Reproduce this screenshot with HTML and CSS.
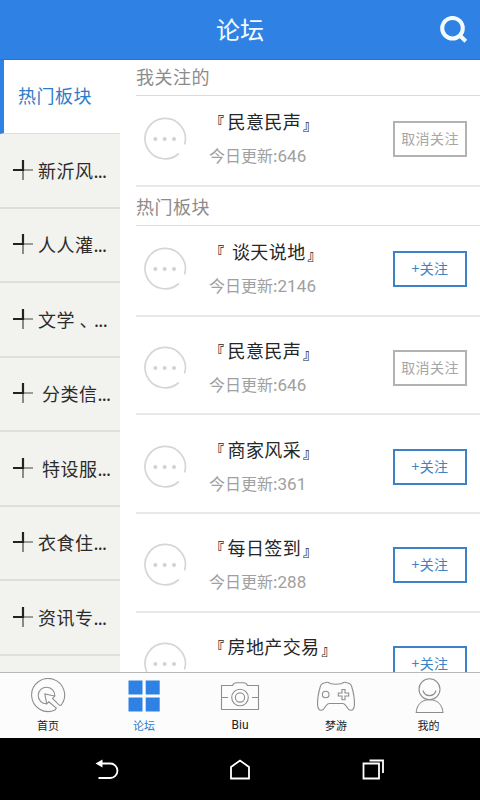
FILE: index.html
```html
<!DOCTYPE html>
<html lang="zh-CN">
<head>
    <meta charset="UTF-8">
    <meta name="viewport" content="width=device-width, initial-scale=1.0">
    <title>论坛</title>
    <link rel="stylesheet" href="styles.css">
</head>
<body>

    <!-- Shared icons -->
    <svg class="icon-defs" width="0" height="0">
        <symbol id="icon-plus" viewBox="0 0 22 22">
            <path d="M11 11v10M11 11h10" stroke="#444" stroke-width="1.2"/>
            <path d="M1 11h11M11 1v11" stroke="#222" stroke-width="2.2"/>
        </symbol>
        <symbol id="icon-chat" viewBox="0 0 44 44">
            <path d="M41.5 27.5A20.2 20.2 0 1 0 35.8 36.5" fill="none" stroke="#d6d6d6" stroke-width="1.7"/>
            <circle cx="12.3" cy="22" r="2" fill="#d2d2d2"/>
            <circle cx="21.7" cy="22" r="2" fill="#d2d2d2"/>
            <circle cx="31" cy="22" r="2" fill="#d2d2d2"/>
        </symbol>
    </svg>

    <div class="app">
        <header class="header">
            <h1>论坛</h1>
            <svg class="search" viewBox="0 0 28 28">
                <circle cx="12.5" cy="12.2" r="10.3"/>
                <path d="M18.5 18.2L25.8 25.2"/>
            </svg>
        </header>

        <div class="content">
            <!-- Categories -->
            <nav class="sidebar">
                <a class="category active">热门板块</a>
                <a class="category"><svg class="plus"><use href="#icon-plus"/></svg>新沂风<span class="dots">...</span></a>
                <a class="category"><svg class="plus"><use href="#icon-plus"/></svg>人人灌<span class="dots">...</span></a>
                <a class="category"><svg class="plus"><use href="#icon-plus"/></svg>文学 <span class="comma">、</span><span class="dots">...</span></a>
                <a class="category spaced"><svg class="plus"><use href="#icon-plus"/></svg>分类信<span class="dots">...</span></a>
                <a class="category spaced"><svg class="plus"><use href="#icon-plus"/></svg>特设服<span class="dots">...</span></a>
                <a class="category"><svg class="plus"><use href="#icon-plus"/></svg>衣食住<span class="dots">...</span></a>
                <a class="category"><svg class="plus"><use href="#icon-plus"/></svg>资讯专<span class="dots">...</span></a>
            </nav>

            <!-- Forum list -->
            <main class="forums">
                <h2 class="first-title">我关注的</h2>
                <div class="forum short">
                    <svg class="chat"><use href="#icon-chat"/></svg>
                    <div class="info">
                        <h3><span class="open">『</span>民意民声<span class="close">』</span></h3>
                        <p>今日更新:<span class="count">646</span></p>
                    </div>
                    <button class="follow followed">取消关注</button>
                </div>

                <h2>热门板块</h2>
                <div class="forum short">
                    <svg class="chat"><use href="#icon-chat"/></svg>
                    <div class="info">
                        <h3><span class="open">『</span> 谈天说地<span class="close">』</span></h3>
                        <p>今日更新:<span class="count">2146</span></p>
                    </div>
                    <button class="follow">+关注</button>
                </div>
                <div class="forum">
                    <svg class="chat"><use href="#icon-chat"/></svg>
                    <div class="info">
                        <h3><span class="open">『</span>民意民声<span class="close">』</span></h3>
                        <p>今日更新:<span class="count">646</span></p>
                    </div>
                    <button class="follow followed">取消关注</button>
                </div>
                <div class="forum">
                    <svg class="chat"><use href="#icon-chat"/></svg>
                    <div class="info">
                        <h3><span class="open">『</span>商家风采<span class="close">』</span></h3>
                        <p>今日更新:<span class="count">361</span></p>
                    </div>
                    <button class="follow">+关注</button>
                </div>
                <div class="forum">
                    <svg class="chat"><use href="#icon-chat"/></svg>
                    <div class="info">
                        <h3><span class="open">『</span>每日签到<span class="close">』</span></h3>
                        <p>今日更新:<span class="count">288</span></p>
                    </div>
                    <button class="follow">+关注</button>
                </div>
                <div class="forum">
                    <svg class="chat"><use href="#icon-chat"/></svg>
                    <div class="info">
                        <h3><span class="open">『</span>房地产交易<span class="close">』</span></h3>
                    </div>
                    <button class="follow">+关注</button>
                </div>
            </main>
        </div>

        <!-- Bottom tabs -->
        <nav class="tabs">
            <a class="tab">
                <svg viewBox="1.5 0 40 36">
                    <path d="M34.5 27.3A16.5 16.5 0 1 0 28.5 32L29.8 30L22.3 23.8L20.3 25.8L18.3 16L28.3 18L26 20.5L33 27.3Z"/>
                    <path d="M20 25.8A8.3 8.3 0 1 1 28.3 18"/>
                </svg>
                <span>首页</span>
            </a>
            <a class="tab active">
                <svg viewBox="0 0 40 36">
                    <path d="M4.5 2.5h14v14h-14zM21.7 2.5h14v14h-14zM4.5 19.5h14v14h-14zM21.7 19.5h14v14h-14z"/>
                </svg>
                <span>论坛</span>
            </a>
            <a class="tab">
                <svg viewBox="0 0 40 36">
                    <path d="M1.5 7.5h11q1-2.7 4-2.7h7q3 0 4 2.7h11v24h-37z"/>
                    <circle cx="20" cy="19.5" r="8.3"/>
                    <circle cx="20" cy="19.5" r="4.6"/>
                    <path d="M2 19.5h6M32 19.5h6"/>
                </svg>
                <span class="latin">Biu</span>
            </a>
            <a class="tab">
                <svg viewBox="0 0 40 36">
                    <path d="M9 4.7Q12 3.6 14 5.5Q20 7 26 5.5Q28 3.6 31 4.7Q35 5.2 35.8 9Q38.8 19 38.4 27Q38 32.5 34.5 32.2Q32.5 32 30.5 28.5Q28.5 25.5 27 25.5H13Q11.5 25.5 9.5 28.5Q7.5 32 5.5 32.2Q2 32.5 1.6 27Q1.2 19 4.2 9Q5 5.2 9 4.7Z"/>
                    <circle cx="9.7" cy="16.5" r="3.3"/>
                    <path d="M26 11.5h3v3.5h3.7v3h-3.7v3.7h-3v-3.7h-3.7v-3h3.7z"/>
                </svg>
                <span>梦游</span>
            </a>
            <a class="tab last">
                <svg viewBox="0.5 0 40 36">
                    <circle cx="21" cy="11.3" r="10.5"/>
                    <path d="M14.5 12.5A6.7 6.7 0 0 0 27.5 12.5"/>
                    <path d="M7.7 34.5C8.5 26 14 21.8 21 21.8S33.5 26 34.5 34.5Z"/>
                </svg>
                <span>我的</span>
            </a>
        </nav>

        <!-- System navigation -->
        <footer class="system-bar">
            <svg viewBox="0 0 24 24">
                <path d="M5 4.5h10.2a7.2 7.2 0 0 1 0 14.5H3.5"/>
                <path class="solid" d="M0.5 4.5L7.5 0.5v8z"/>
            </svg>
            <svg viewBox="0 0 24 24">
                <path d="M3 19.5V8L12 1.5L21 8V19.5Z"/>
            </svg>
            <svg viewBox="0 0 24 24">
                <path d="M2.5 4.5h15.5v15h-15.5z"/>
                <path d="M8.5 1.5h13.5V14"/>
            </svg>
        </footer>
    </div>

</body>
</html>
```
FILE: styles.css
```css
* {
    box-sizing: border-box;
}
body {
    margin: 0;
    font-family: "Noto Sans CJK SC", sans-serif;
    background-color: #fff;
}
h1, h2, h3, p {
    margin: 0;
    font-weight: 400;
}
.icon-defs {
    display: none;
}
.app {
    display: flex;
    flex-direction: column;
    width: 480px;
    height: 800px;
    overflow: hidden;
}
.header {
    display: grid;
    grid-template-columns: 1fr auto 1fr;
    align-items: center;
    height: 60px;
    flex-shrink: 0;
    padding-right: 12px;
    padding-left: 12px;
    background-color: #2f82e4;
    border-bottom: 1px solid #2874cf;
}
.header h1 {
    grid-column: 2;
    height: 59px;
    font-size: 24px;
    line-height: 57px;
    color: #f2fbff;
}
.search {
    justify-self: end;
    width: 28px;
    height: 28px;
    fill: none;
    stroke: #f2fbff;
    stroke-width: 4;
}
.content {
    display: flex;
    height: 612px;
    flex-shrink: 0;
    overflow: hidden;
}
.sidebar {
    width: 120px;
    flex-shrink: 0;
    background-color: #f2f2ee;
}
.category {
    display: flex;
    align-items: center;
    height: 74.5px;
    padding-left: 12px;
    padding-bottom: 1px;
    border-bottom: 2px solid #dededb;
    font-size: 18px;
    letter-spacing: 0.5px;
    color: #2b2b2b;
    white-space: pre;
}
.category.active {
    height: 74px;
    padding-left: 14px;
    padding-bottom: 3px;
    border-left: 4px solid #2f82e4;
    border-bottom: 1px solid #dededb;
    background-color: #fff;
    color: #2e7cc8;
}
.plus {
    width: 22px;
    height: 22px;
    flex-shrink: 0;
    margin-right: 4px;
}
.spaced .plus {
    margin-right: 8px;
}
.dots {
    letter-spacing: -0.7px;
}
.comma {
    margin-right: 5px;
    font-feature-settings: "halt";
}
.forums {
    flex: 1;
    padding-left: 16px;
}
.forums h2 {
    height: 39.5px;
    border-bottom: 1px solid #dcdcdc;
    font-size: 18px;
    line-height: 38px;
    letter-spacing: 0.5px;
    color: #8c8c8c;
}
.forums .first-title {
    height: 36px;
    line-height: 33px;
}
.forum {
    display: flex;
    align-items: center;
    height: 98.7px;
    padding: 6px 13px 0 7px;
    border-bottom: 2px solid #e8e8e8;
}
.forum.short {
    height: 90.5px;
    padding-top: 0;
    padding-bottom: 3px;
}
.chat {
    width: 44px;
    height: 44px;
    flex-shrink: 0;
}
.info {
    flex: 1;
    height: 62px;
    padding-left: 22px;
    white-space: nowrap;
}
.info h3 {
    height: 26px;
    font-size: 18px;
    line-height: 26px;
    letter-spacing: 0.4px;
    color: #262626;
}
/* Title brackets are smaller than the title text */
.open, .close {
    display: inline-block;
    width: 18.5px;
    font-size: 14px;
    font-weight: 700;
    line-height: 14px;
}
.open {
    padding-left: 1px;
    vertical-align: 2px;
}
.close {
    padding-left: 2px;
    vertical-align: -1px;
}
.info p {
    margin-top: 8px;
    font-size: 16px;
    line-height: 26px;
    color: #a0a0a0;
}
.count {
    font-family: Roboto, sans-serif;
    font-size: 17px;
    letter-spacing: 0.1px;
}
.follow {
    width: 74px;
    height: 36px;
    padding: 0 0 2px;
    border: 2px solid #3b82c6;
    background-color: #fff;
    font-family: inherit;
    font-size: 14px;
    letter-spacing: 0.4px;
    color: #3b82c6;
}
.follow.followed {
    border-color: #b2b2b2;
    color: #a6a6a6;
}
.tabs {
    display: flex;
    height: 66px;
    flex-shrink: 0;
    border-top: 1px solid #b8b8b8;
    background-color: #fcfcfc;
}
.tab {
    display: flex;
    flex-direction: column;
    align-items: center;
    width: 96px;
    padding-top: 5px;
    font-size: 11px;
    line-height: 16px;
    color: #222;
}
.tab svg {
    width: 40px;
    height: 36px;
    margin-bottom: 3px;
    fill: none;
    stroke: #8e8e8e;
    stroke-width: 1.1;
}
.tab.active {
    color: #2e7cc8;
}
.tab.active svg {
    fill: #2f82e4;
    stroke: none;
}
.tab.last {
    padding-right: 7px;
}
.latin {
    font-family: Roboto, sans-serif;
    font-size: 12px;
}
.system-bar {
    display: flex;
    justify-content: center;
    gap: 109px;
    height: 62px;
    flex-shrink: 0;
    padding-top: 21px;
    background-color: #000;
}
.system-bar svg {
    width: 24px;
    height: 24px;
    fill: none;
    stroke: #fff;
    stroke-width: 1.8;
}
.system-bar .solid {
    fill: #fff;
    stroke: none;
}
```
